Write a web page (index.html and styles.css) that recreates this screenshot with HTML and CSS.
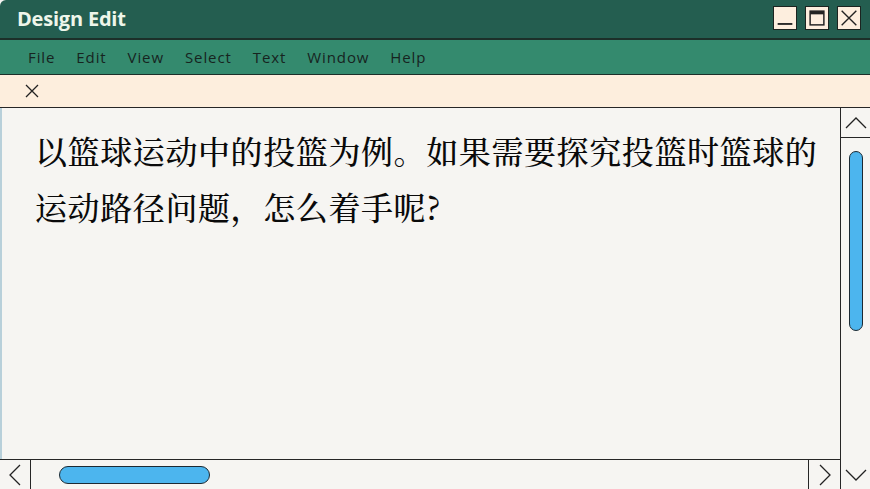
FILE: index.html
```html
<!DOCTYPE html>
<html lang="zh-CN">
<head>
    <meta charset="UTF-8">
    <meta name="viewport" content="width=device-width, initial-scale=1.0">
    <title>Design Edit</title>
    <link rel="stylesheet" href="styles.css">
</head>
<body>
    <div class="window">
        <div class="titlebar">
            <span class="title">Design Edit</span>
            <div class="win-buttons">
                <button class="win-btn">
                    <svg width="24" height="24" viewBox="0 0 24 24"><path d="M4 18.5h16" stroke="#222" stroke-width="2"/></svg>
                </button>
                <button class="win-btn">
                    <svg width="24" height="24" viewBox="0 0 24 24"><rect x="4.5" y="4.5" width="15" height="15" fill="none" stroke="#222" stroke-width="1.6"/><rect x="4.5" y="4.5" width="15" height="3.5" fill="#222"/></svg>
                </button>
                <button class="win-btn">
                    <svg width="24" height="24" viewBox="0 0 24 24"><path d="M4 4l16 16M20 4L4 20" stroke="#222" stroke-width="1.5"/></svg>
                </button>
            </div>
        </div>

        <nav class="menubar">
            <span>File</span>
            <span>Edit</span>
            <span>View</span>
            <span>Select</span>
            <span>Text</span>
            <span>Window</span>
            <span>Help</span>
        </nav>

        <div class="toolbar">
            <svg width="14" height="14" viewBox="0 0 14 14"><path d="M1 1l12 12M13 1L1 13" stroke="#222" stroke-width="1.3"/></svg>
        </div>

        <div class="main">
            <div class="editor">
                <div class="content">
                    <p class="doc-text">以篮球运动中的投篮为例。如果需要探究投篮时篮球的运动路径问题，怎么着手呢?</p>
                </div>
                <div class="hscroll">
                    <div class="arrow-box left-box">
                        <svg width="14" height="24" viewBox="0 0 14 24"><path d="M12 2L2 12l10 10" fill="none" stroke="#222" stroke-width="1.3"/></svg>
                    </div>
                    <div class="h-track"><div class="h-thumb"></div></div>
                    <div class="arrow-box right-box">
                        <svg width="14" height="24" viewBox="0 0 14 24"><path d="M2 2l10 10L2 22" fill="none" stroke="#222" stroke-width="1.3"/></svg>
                    </div>
                </div>
            </div>
            <div class="vscroll">
                <div class="v-arrow up-box">
                    <svg width="24" height="14" viewBox="0 0 24 14"><path d="M2 12L12 2l10 10" fill="none" stroke="#222" stroke-width="1.3"/></svg>
                </div>
                <div class="v-track"><div class="v-thumb"></div></div>
                <div class="v-arrow down-box">
                    <svg width="24" height="14" viewBox="0 0 24 14"><path d="M2 2l10 10L22 2" fill="none" stroke="#222" stroke-width="1.3"/></svg>
                </div>
            </div>
        </div>
    </div>
</body>
</html>
```

FILE: styles.css
```css
* {
    margin: 0;
    padding: 0;
    box-sizing: border-box;
}

body {
    font-family: 'Open Sans', 'Lato', sans-serif;
    background: #f6f5f2;
    width: 870px;
    height: 489px;
    overflow: hidden;
}

.window {
    display: flex;
    flex-direction: column;
    width: 870px;
    height: 489px;
}

.titlebar {
    height: 40px;
    background: #245e50;
    border-bottom: 2px solid #1c2f29;
    border-top-left-radius: 6px;
    display: flex;
    align-items: center;
    justify-content: space-between;
    padding: 0 9px 2px 17px;
}

.title {
    font-family: 'Open Sans', sans-serif;
    font-size: 20px;
    font-weight: 700;
    color: #eef6ea;
    letter-spacing: -0.2px;
}

.win-buttons {
    display: flex;
    gap: 8px;
}

.win-btn {
    width: 24px;
    height: 24px;
    background: #fdeede;
    border: 1px solid #1c2420;
    display: flex;
    align-items: center;
    justify-content: center;
}

.win-btn svg {
    display: block;
}

.menubar {
    height: 35px;
    background: #348a6e;
    border-bottom: 1px solid #1c2f29;
    display: flex;
    align-items: center;
    gap: 21px;
    padding: 0 0 0 28px;
    font-size: 15px;
    color: #17241f;
    letter-spacing: 0.9px;
}

.toolbar {
    height: 33px;
    background: #fdeedd;
    border-bottom: 1px solid #262626;
    display: flex;
    align-items: center;
    padding-left: 25px;
}

.main {
    flex: 1;
    display: flex;
    min-height: 0;
}

.editor {
    flex: 1;
    display: flex;
    flex-direction: column;
}

.content {
    flex: 1;
    border-left: 2px solid #b8d0da;
    padding: 14px 4px 0 33px;
}

.doc-text {
    font-family: 'Noto Serif CJK SC', 'Noto Sans CJK SC', serif;
    font-size: 32px;
    font-weight: 500;
    line-height: 56px;
    letter-spacing: 0.6px;
    color: #0a0a0a;
}

.hscroll {
    height: 30px;
    border-top: 1px solid #262626;
    display: flex;
}

.arrow-box {
    width: 31px;
    display: flex;
    align-items: center;
    justify-content: center;
}

.left-box {
    border-right: 1px solid #262626;
}

.right-box {
    width: 32px;
    border-left: 1px solid #262626;
}

.h-track {
    flex: 1;
    padding: 6px 0 0 28px;
}

.h-thumb {
    width: 151px;
    height: 18px;
    background: #4cb5ee;
    border: 1.5px solid #1c2a33;
    border-radius: 9px;
}

.vscroll {
    width: 30px;
    border-left: 1px solid #262626;
    display: flex;
    flex-direction: column;
}

.v-arrow {
    height: 30px;
    display: flex;
    align-items: center;
    justify-content: center;
}

.up-box {
    border-bottom: 1px solid #262626;
}

.down-box {
    height: 29px;
}

.v-track {
    flex: 1;
    padding: 13px 0 0 8px;
}

.v-thumb {
    width: 14px;
    height: 180px;
    background: #4cb5ee;
    border: 1.5px solid #1c2a33;
    border-radius: 7px;
}
```
